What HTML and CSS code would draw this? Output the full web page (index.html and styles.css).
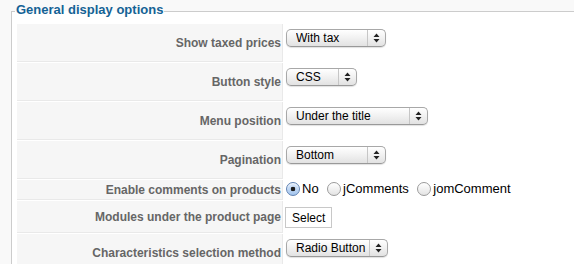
FILE: index.html
```html
<!DOCTYPE html>
<html lang="en">
<head>
  <meta charset="UTF-8" />
  <meta name="viewport" content="width=device-width, initial-scale=1.0"/>
  <title>Configuration</title>
  <link rel="stylesheet" href="styles.css">
</head>
<body>

  <fieldset class="adminform">
    <legend>General display options</legend>
    <table class="admintable">
      <tr class="row-tall">
        <td class="key">Show taxed prices</td>
        <td class="value">
          <span class="select select-tax">
            <select name="show_taxes">
              <option>With tax</option>
              <option>Without tax</option>
            </select>
            <span class="arrows"><svg width="7" height="10" viewBox="0 0 7 10"><path d="M3.5 0.5L6.5 4H0.5Z M3.5 9.5L6.5 6H0.5Z" fill="#222"/></svg></span>
          </span>
        </td>
      </tr>
      <tr class="row-tall">
        <td class="key">Button style</td>
        <td class="value">
          <span class="select select-button">
            <select name="button_style">
              <option>CSS</option>
              <option>Image</option>
            </select>
            <span class="arrows"><svg width="7" height="10" viewBox="0 0 7 10"><path d="M3.5 0.5L6.5 4H0.5Z M3.5 9.5L6.5 6H0.5Z" fill="#222"/></svg></span>
          </span>
        </td>
      </tr>
      <tr class="row-tall">
        <td class="key">Menu position</td>
        <td class="value">
          <span class="select select-menu">
            <select name="menu_position">
              <option>Under the title</option>
              <option>Above the title</option>
            </select>
            <span class="arrows"><svg width="7" height="10" viewBox="0 0 7 10"><path d="M3.5 0.5L6.5 4H0.5Z M3.5 9.5L6.5 6H0.5Z" fill="#222"/></svg></span>
          </span>
        </td>
      </tr>
      <tr class="row-tall">
        <td class="key">Pagination</td>
        <td class="value">
          <span class="select select-pagination">
            <select name="pagination">
              <option>Bottom</option>
              <option>Top</option>
              <option>Both</option>
            </select>
            <span class="arrows"><svg width="7" height="10" viewBox="0 0 7 10"><path d="M3.5 0.5L6.5 4H0.5Z M3.5 9.5L6.5 6H0.5Z" fill="#222"/></svg></span>
          </span>
        </td>
      </tr>
      <tr class="row-small">
        <td class="key">Enable comments on products</td>
        <td class="value value-middle">
          <label class="radio"><input type="radio" name="comments" checked> No</label>
          <label class="radio"><input type="radio" name="comments"> jComments</label>
          <label class="radio"><input type="radio" name="comments"> jomComment</label>
        </td>
      </tr>
      <tr class="row-medium">
        <td class="key">Modules under the product page</td>
        <td class="value value-middle">
          <button type="button" class="select-btn">Select</button>
        </td>
      </tr>
      <tr class="row-tall">
        <td class="key">Characteristics selection method</td>
        <td class="value">
          <span class="select select-method">
            <select name="characteristic_method">
              <option>Radio Button</option>
              <option>Dropdown</option>
            </select>
            <span class="arrows"><svg width="7" height="10" viewBox="0 0 7 10"><path d="M3.5 0.5L6.5 4H0.5Z M3.5 9.5L6.5 6H0.5Z" fill="#222"/></svg></span>
          </span>
        </td>
      </tr>
    </table>
  </fieldset>

</body>
</html>
```

FILE: styles.css
```css
html, body {
  overflow: hidden;
}

body {
  font-family: "Liberation Sans", Arial, sans-serif;
  margin: 0;
  padding: 0;
  background-color: #f9f9f9;
  color: #333;
}

.adminform {
  margin: 2px 0 0 11px;
  padding: 2px 5px 0 5px;
  width: 640px;
  border: 1px solid #ccc;
  background-color: white;
}

.adminform legend {
  color: #146295;
  font-size: 13px;
  font-weight: bold;
  line-height: 16px;
  padding: 0 1px 3px 1px;
  margin-left: -2px;
}

.admintable {
  border-collapse: separate;
  border-spacing: 1px;
  margin-left: -1px;
  width: 100%;
}

.admintable td {
  padding: 0;
}

.admintable td.key {
  width: 264px;
  padding-right: 1px;
  background-color: #f6f6f6;
  text-align: right;
  color: #666;
  font-size: 12px;
  font-weight: bold;
  border-bottom: 1px solid #e9e9e9;
  border-right: 1px solid #e9e9e9;
  vertical-align: middle;
}

.row-tall td.key {
  height: 37px;
}

.row-small td.key {
  height: 19px;
}

.row-medium td.key {
  height: 31px;
}

.admintable td.value {
  vertical-align: top;
  padding: 4px 0 0 2px;
}

.admintable td.value-middle {
  vertical-align: middle;
  padding-top: 0;
}

/* aqua-like popup menus */
.select {
  display: inline-flex;
  box-sizing: border-box;
  height: 18px;
  border: 1px solid #a8a8a8;
  border-bottom-color: #999;
  border-radius: 5px;
  background: linear-gradient(#ffffff, #f1f1f1 50%, #e2e2e2);
  box-shadow: 0 1px 1px rgba(0, 0, 0, 0.12);
}

.select select {
  -webkit-appearance: none;
  appearance: none;
  flex: 1;
  min-width: 0;
  border: none;
  background: transparent;
  font-family: "Liberation Sans", Arial, sans-serif;
  font-size: 12px;
  color: #000;
  padding: 0 0 0 9px;
  margin: 0;
  outline: none;
}

.select .arrows {
  width: 17px;
  border-left: 1px solid #c6c6c6;
  display: flex;
  align-items: center;
  justify-content: center;
}

.select-tax { width: 100px; }
.select-button { width: 71px; }
.select-menu { width: 142px; }
.select-pagination { width: 100px; }
.select-method { width: 102px; }

.radio {
  display: inline-flex;
  align-items: center;
  font-size: 13px;
  color: #000;
  margin-right: 4px;
}

.radio input {
  -webkit-appearance: none;
  appearance: none;
  width: 14px;
  height: 14px;
  margin: 1px 2px 0 0;
  border: 1px solid #9a9a9a;
  border-radius: 50%;
  background: linear-gradient(#ffffff, #e4e4e4);
  box-shadow: inset 0 1px 1px rgba(255, 255, 255, 0.8);
}

.radio input:checked {
  border-color: #5f82b3;
  background: radial-gradient(circle, #1d1d1d 0 2px, transparent 2.6px), linear-gradient(#dce9fa, #a3c5ee);
}

.select-btn {
  font-family: "Liberation Sans", Arial, sans-serif;
  font-size: 12px;
  color: #000;
  background-color: white;
  border: 1px solid #c8c8c8;
  height: 21px;
  padding: 0 6px;
  margin: 1px 0 0 -1px;
}
```
